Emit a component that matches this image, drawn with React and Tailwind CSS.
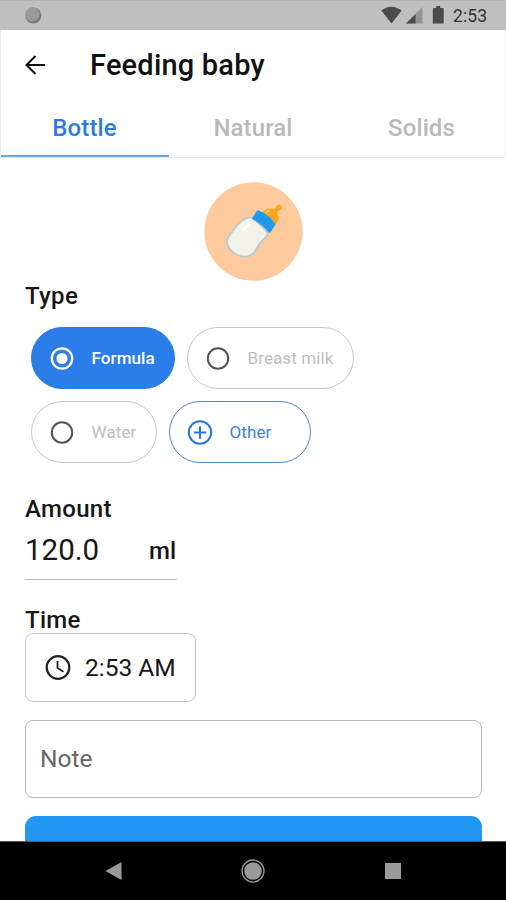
function StatusBar() {
  return (
    <header className="flex h-[30px] shrink-0 items-center justify-between border-t border-[#b0b0b0] bg-[#bfbfbf] pl-6 pr-[18px]">
      <svg width="18" height="18" viewBox="0 0 18 18">
        <circle cx="9.3" cy="8.500" r="8" fill="#777" />
        <circle cx="8.4" cy="7.500" r="7.2" fill="#999" />
      </svg>
      <div className="flex items-center">
        <svg className="-mt-px" width="72" height="20" viewBox="0 0 72 20">
          <path d="M10.500 18.500L.300 5.600Q10.500-2.200 20.700 5.600Z" fill="#4b4b4b" />
          <path d="M41.500 2v16.500H25Z" fill="#929292" />
          <path d="M34.500 9v9.500H25Z" fill="#4b4b4b" />
          <path d="M55.200 1h4v2h2.300q1.200 0 1.200 1.200v13.200q0 1.200-1.200 1.200h-8.500q-1.200 0-1.200-1.200V4.200q0-1.200 1.200-1.200h2.200z" fill="#4b4b4b" />
        </svg>
        <span className="w-[35px] whitespace-nowrap text-[17.5px] leading-[20px] tracking-[0.1px] text-[#333]">2:53</span>
      </div>
    </header>
  );
}

function TopBar() {
  return (
    <div className="flex h-[70px] items-center pl-[22px]">
      <svg width="24" height="24" viewBox="0 0 24 24" fill="none" stroke="#111" strokeWidth="2">
        <path d="M22 12H3.500M12.500 3L3.500 12l9 9" />
      </svg>
      <h1 className="ml-[43px] text-[29px] font-medium leading-[34px] tracking-[0.2px] text-[#111]">Feeding baby</h1>
    </div>
  );
}

function Tabs() {
  return (
    <nav className="grid h-[58px] grid-cols-3 border-b border-[#ebebeb] text-center text-[24px] font-medium leading-[56px] tracking-[0.1px] text-[#b9b9b9]">
      <div className="h-[57px] border-b-2 border-[#61a6e6] pr-px text-[#2c7be5]">Bottle</div>
      <div>Natural</div>
      <div className="pl-px">Solids</div>
    </nav>
  );
}

function Bottle() {
  return (
    <svg className="mx-auto block shrink-0" width="99" height="99" viewBox="0 0 99 99">
      <circle cx="49.500" cy="49.500" r="49.200" fill="#fdca9e" />
      <path d="M49 35.500C45 35 41 36 38 38.500C34 42 32 44 29.500 48L24.500 55C22 59 22.500 63 26 67C30 71.500 35 74.500 40 74.500C45 75 48 73 51 69L56 61C59 57 62.500 56 64 51Z" fill="#f3f2e9" stroke="#b9cbd0" strokeWidth="1.800" strokeLinejoin="round" />
      <path d="M44.500 41q-1.500 4-5 7" fill="none" stroke="#fff" strokeWidth="3" strokeLinecap="round" />
      <path d="M58.500 30C61 27 65.500 25.500 69.500 27.500L71.500 26C71.500 22.500 76.500 21.500 77.500 24.500C78.300 27.500 75.500 28.500 73.500 29.500L72.800 31.500C76 35.500 74.500 40 70.500 43.500Z" fill="#faa51d" />
      <path d="M62.500 30.500q.5-1.500 2.500-1.800" fill="none" stroke="#ffd05c" strokeWidth="2" strokeLinecap="round" />
      <path d="M54 29.500Q64.500 34 70 42.500L65.500 49.500Q59 41 49.500 36.500Z" fill="#209bed" stroke="#209bed" strokeWidth="2.600" strokeLinejoin="round" />
      <path d="M56.500 31l-4 6M60 33.500l-4 6M63.500 36l-4 6.500M67 39.500l-4 6" stroke="#1784d0" strokeWidth=".7" />
    </svg>
  );
}

function Ring({ color, selected, plus }) {
  return (
    <svg className="shrink-0" width="26" height="26" viewBox="0 0 26 26" fill="none" stroke={color}>
      <circle cx="13" cy="13.500" r={plus ? 11.200 : 10.200} strokeWidth={selected ? 2.300 : 2} />
      {selected && <circle cx="13" cy="13.500" r="5.600" fill={color} stroke="none" />}
      {plus && <path d="M13 7.300v12.400M6.800 13.500h12.400" strokeWidth="2" />}
    </svg>
  );
}

function Chip({ className, children, ...ring }) {
  return (
    <div className={`flex h-[62px] items-center whitespace-nowrap rounded-full border pl-[17px] text-[17px] leading-[22px] ${className}`}>
      <Ring {...ring} />
      <span className="ml-[16.5px] tracking-[0.1px]">{children}</span>
    </div>
  );
}

function NavBar() {
  return (
    <footer className="flex h-[58px] shrink-0 items-center bg-black pl-[105px]">
      <svg width="17" height="20" viewBox="0 0 17 20"><path d="M.500 10L16.500 1v18Z" fill="#999" /></svg>
      <svg className="ml-[119px]" width="24" height="24" viewBox="0 0 24 24">
        <circle cx="12" cy="12" r="11" fill="none" stroke="#999" strokeWidth="1.300" />
        <circle cx="12" cy="12" r="8.800" fill="#999" />
      </svg>
      <div className="ml-[120px] size-4 bg-[#999]" />
    </footer>
  );
}

export default function App() {
  return (
    <div className="flex h-[900px] w-[506px] flex-col overflow-hidden bg-white font-['Roboto',sans-serif] text-[#171717]">
      <StatusBar />
      <div className="shrink-0 border-x border-[#ededed]">
        <TopBar />
        <Tabs />
      </div>
      <main className="flex min-h-0 flex-1 flex-col overflow-hidden border-b border-[#555] px-[25px] pt-6">
        <Bottle />
        <h2 className="mt-px text-[24px] font-medium leading-[28px] tracking-[0.3px]">Type</h2>
        <div className="ml-[6px] mt-[17px] flex shrink-0 gap-3">
          <Chip className="w-[144px] border-[#2b7de9] bg-[#2b7de9] font-medium text-white" color="#fff" selected>Formula</Chip>
          <Chip className="w-[167px] border-[#c6c6c6] text-[#bdbdbd]" color="#555">Breast milk</Chip>
        </div>
        <div className="ml-[6px] mt-3 flex shrink-0 gap-3">
          <Chip className="w-[126px] border-[#c6c6c6] text-[#bdbdbd]" color="#555">Water</Chip>
          <Chip className="w-[142px] border-[#4a8bea] text-[#3c80e5]" color="#2875e4" plus>Other</Chip>
        </div>
        <h2 className="mt-[32px] text-[24px] font-medium leading-[28px] tracking-[0.3px]">Amount</h2>
        <div className="flex h-[57px] w-[152px] shrink-0 justify-between border-b border-[#bcbcbc] pr-px pt-[10px]">
          <span className="text-[29.5px] leading-[34px]">120.0</span>
          <span className="text-[24px] font-medium leading-[37px]">ml</span>
        </div>
        <h2 className="mt-[26px] text-[24px] font-medium leading-[28px] tracking-[0.3px]">Time</h2>
        <div className="-mt-px flex h-[69px] w-[171px] shrink-0 items-center rounded-lg border border-[#c4c4c4] pl-[19px]">
          <svg className="shrink-0" width="26" height="26" viewBox="0 0 26 26" fill="none" stroke="#222">
            <circle cx="13" cy="12.500" r="11.300" strokeWidth="2.200" />
            <path d="M12.500 6v7l6 3.700" strokeWidth="1.800" />
          </svg>
          <span className="ml-[14px] whitespace-nowrap text-[24.5px] leading-[30px]">2:53 AM</span>
        </div>
        <div className="mt-[18px] flex h-[78px] w-[457px] shrink-0 items-center rounded-lg border border-[#b9b9b9] pl-[14px] text-[24.5px] text-[#666]">Note</div>
        <div className="mt-[18px] h-[60px] w-[457px] shrink-0 rounded-[11px] bg-[#2196f3]" />
      </main>
      <NavBar />
    </div>
  );
}
